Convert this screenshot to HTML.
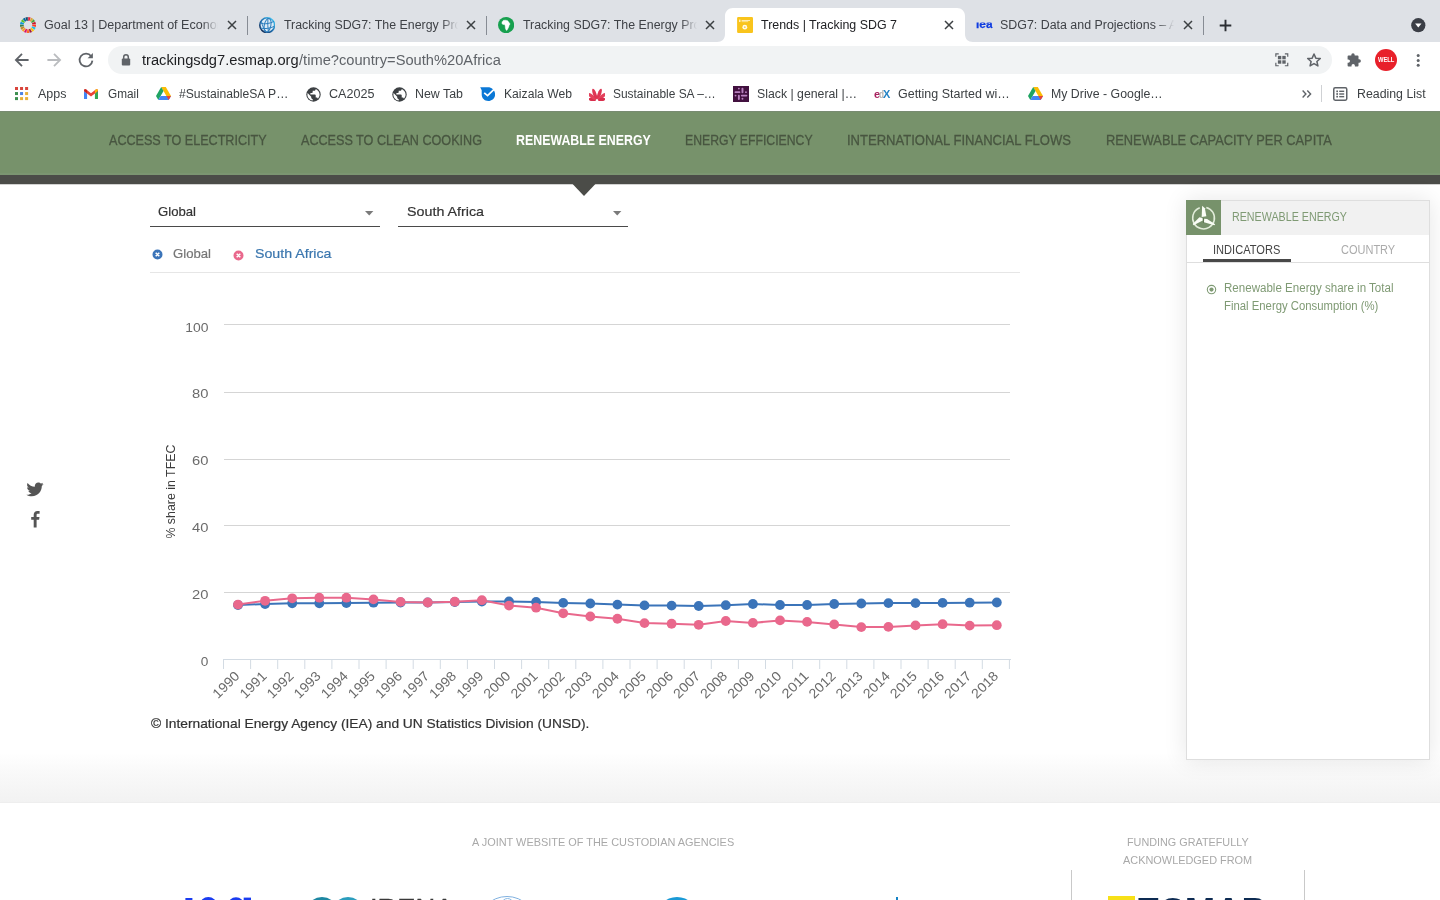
<!DOCTYPE html>
<html lang="en"><head><meta charset="utf-8"><title>Trends | Tracking SDG 7</title>
<style>
html,body{margin:0;padding:0;}
body{width:1440px;height:900px;overflow:hidden;position:relative;background:#fff;font-family:"Liberation Sans",sans-serif;}
.t{position:absolute;white-space:nowrap;transform-origin:0 50%;margin:0;padding:0;}
.b{position:absolute;display:block;}
#root{position:absolute;left:0;top:0;width:1440px;height:900px;overflow:hidden;will-change:transform;}
svg text{font-family:"Liberation Sans",sans-serif;}
</style></head><body><div id="root">
<div class="b" style="left:0px;top:0px;width:1440px;height:42px;background:#dee1e6;"></div>
<div class="b" style="left:0px;top:42px;width:1440px;height:68px;background:#fff;"></div>
<svg class="b" style="left:717px;top:8px;" width="256" height="34" viewBox="0 0 256 34"><path d="M0 34 C5 34 8 31 8 26 V8 C8 3.5 11.5 0 16 0 H240 C244.5 0 248 3.5 248 8 V26 C248 31 251 34 256 34 Z" fill="#fff"/></svg>
<div class="b" style="left:247px;top:16px;width:1px;height:19px;background:#878c94;"></div>
<div class="b" style="left:486px;top:16px;width:1px;height:19px;background:#878c94;"></div>
<div class="b" style="left:1203px;top:16px;width:1px;height:19px;background:#878c94;"></div>
<div class="b" style="left:44.2px;top:17px;width:176px;height:16px;overflow:hidden;"><span class="t" style="left:0;top:1px;font-size:12px;line-height:14px;color:#3f4247;transform:scaleX(1.045);">Goal 13 | Department of Economic and Social Affairs</span><div class="b" style="right:0;top:0;width:18px;height:16px;background:linear-gradient(90deg,rgba(222,225,230,0),rgba(222,225,230,1) 90%);"></div></div>
<div class="b" style="left:283.7px;top:17px;width:176px;height:16px;overflow:hidden;"><span class="t" style="left:0;top:1px;font-size:12px;line-height:14px;color:#3f4247;transform:scaleX(1.031);">Tracking SDG7: The Energy Progress Report</span><div class="b" style="right:0;top:0;width:18px;height:16px;background:linear-gradient(90deg,rgba(222,225,230,0),rgba(222,225,230,1) 90%);"></div></div>
<div class="b" style="left:522.5px;top:17px;width:176px;height:16px;overflow:hidden;"><span class="t" style="left:0;top:1px;font-size:12px;line-height:14px;color:#3f4247;transform:scaleX(1.031);">Tracking SDG7: The Energy Progress Report</span><div class="b" style="right:0;top:0;width:18px;height:16px;background:linear-gradient(90deg,rgba(222,225,230,0),rgba(222,225,230,1) 90%);"></div></div>
<span class="t" style="left:760.90px;top:17.60px;font-size:12px;line-height:14px;color:#202124;transform:scaleX(1.0352);">Trends | Tracking SDG 7</span>
<div class="b" style="left:1000.4px;top:17px;width:176px;height:16px;overflow:hidden;"><span class="t" style="left:0;top:1px;font-size:12px;line-height:14px;color:#3f4247;transform:scaleX(1.034);">SDG7: Data and Projections – Analysis - IEA</span><div class="b" style="right:0;top:0;width:18px;height:16px;background:linear-gradient(90deg,rgba(222,225,230,0),rgba(222,225,230,1) 90%);"></div></div>
<svg class="b" style="left:226.7px;top:20.2px;" width="10" height="10" viewBox="0 0 10 10"><path d="M1 1 L9 9 M9 1 L1 9" stroke="#3c4043" stroke-width="1.5" fill="none"/></svg>
<svg class="b" style="left:466px;top:20.2px;" width="10" height="10" viewBox="0 0 10 10"><path d="M1 1 L9 9 M9 1 L1 9" stroke="#3c4043" stroke-width="1.5" fill="none"/></svg>
<svg class="b" style="left:704.6px;top:20.2px;" width="10" height="10" viewBox="0 0 10 10"><path d="M1 1 L9 9 M9 1 L1 9" stroke="#3c4043" stroke-width="1.5" fill="none"/></svg>
<svg class="b" style="left:943.7px;top:20.2px;" width="10" height="10" viewBox="0 0 10 10"><path d="M1 1 L9 9 M9 1 L1 9" stroke="#3c4043" stroke-width="1.5" fill="none"/></svg>
<svg class="b" style="left:1182.7px;top:20.2px;" width="10" height="10" viewBox="0 0 10 10"><path d="M1 1 L9 9 M9 1 L1 9" stroke="#3c4043" stroke-width="1.5" fill="none"/></svg>
<svg class="b" style="left:20px;top:17px;" width="16" height="16" viewBox="0 0 16 16"><path d="M8.24 0.00 A8.0 8.0 0 0 1 10.66 0.46 L9.43 3.95 A4.3 4.3 0 0 0 8.13 3.70 Z" fill="#e5243b"/><path d="M11.11 0.63 A8.0 8.0 0 0 1 13.21 1.93 L10.80 4.74 A4.3 4.3 0 0 0 9.67 4.04 Z" fill="#dda63a"/><path d="M13.56 2.25 A8.0 8.0 0 0 1 15.05 4.22 L11.79 5.97 A4.3 4.3 0 0 0 10.99 4.91 Z" fill="#4c9f38"/><path d="M15.27 4.65 A8.0 8.0 0 0 1 15.94 7.02 L12.27 7.47 A4.3 4.3 0 0 0 11.90 6.20 Z" fill="#c5192d"/><path d="M15.98 7.50 A8.0 8.0 0 0 1 15.76 9.96 L12.17 9.05 A4.3 4.3 0 0 0 12.29 7.73 Z" fill="#ff3a21"/><path d="M15.63 10.42 A8.0 8.0 0 0 1 14.53 12.63 L11.51 10.49 A4.3 4.3 0 0 0 12.10 9.30 Z" fill="#26bde2"/><path d="M14.24 13.01 A8.0 8.0 0 0 1 12.41 14.67 L10.37 11.59 A4.3 4.3 0 0 0 11.35 10.69 Z" fill="#fcc30b"/><path d="M12.01 14.93 A8.0 8.0 0 0 1 9.71 15.82 L8.92 12.20 A4.3 4.3 0 0 0 10.15 11.72 Z" fill="#a21942"/><path d="M9.23 15.90 A8.0 8.0 0 0 1 6.77 15.90 L7.34 12.25 A4.3 4.3 0 0 0 8.66 12.25 Z" fill="#fd6925"/><path d="M6.29 15.82 A8.0 8.0 0 0 1 3.99 14.93 L5.85 11.72 A4.3 4.3 0 0 0 7.08 12.20 Z" fill="#dd1367"/><path d="M3.59 14.67 A8.0 8.0 0 0 1 1.76 13.01 L4.65 10.69 A4.3 4.3 0 0 0 5.63 11.59 Z" fill="#fd9d24"/><path d="M1.47 12.63 A8.0 8.0 0 0 1 0.37 10.42 L3.90 9.30 A4.3 4.3 0 0 0 4.49 10.49 Z" fill="#bf8b2e"/><path d="M0.24 9.96 A8.0 8.0 0 0 1 0.02 7.50 L3.71 7.73 A4.3 4.3 0 0 0 3.83 9.05 Z" fill="#3f7e44"/><path d="M0.06 7.02 A8.0 8.0 0 0 1 0.73 4.65 L4.10 6.20 A4.3 4.3 0 0 0 3.73 7.47 Z" fill="#0a97d9"/><path d="M0.95 4.22 A8.0 8.0 0 0 1 2.44 2.25 L5.01 4.91 A4.3 4.3 0 0 0 4.21 5.97 Z" fill="#56c02b"/><path d="M2.79 1.93 A8.0 8.0 0 0 1 4.89 0.63 L6.33 4.04 A4.3 4.3 0 0 0 5.20 4.74 Z" fill="#00689d"/><path d="M5.34 0.46 A8.0 8.0 0 0 1 7.76 0.00 L7.87 3.70 A4.3 4.3 0 0 0 6.57 3.95 Z" fill="#19486a"/></svg>
<svg class="b" style="left:258.7px;top:16.5px;" width="16.4" height="16.4" viewBox="0 0 16.4 16.4"><defs><linearGradient id="wbg" x1="0.1" y1="0.9" x2="0.9" y2="0.1"><stop offset="0" stop-color="#16305a"/><stop offset="0.5" stop-color="#1f6fb0"/><stop offset="1" stop-color="#45c4f2"/></linearGradient></defs><circle cx="8.2" cy="8.2" r="7.4" fill="#dcebf6" stroke="url(#wbg)" stroke-width="1.6"/><g stroke="#2b7dbd" stroke-width="1" fill="none"><ellipse cx="8.6" cy="8.2" rx="3.3" ry="7" transform="rotate(12 8.2 8.2)"/><path d="M1.4 6 C5 7.6 11 6.6 14.8 4.4 M1.6 11 C6 12.4 11.4 11.2 15.2 9.4 M8.9 1.2 C8.6 6 8.8 11 9.4 15.2 M2.4 4.2 C3.4 9 5 12.4 7.6 15"/></g></svg>
<svg class="b" style="left:497.8px;top:16.8px;" width="16.2" height="16.2" viewBox="0 0 16.2 16.2"><circle cx="8.1" cy="8.1" r="8.1" fill="#17a04f"/><polygon points="4.17,4.67 5.50,3.33 7.83,3.17 9.83,3.83 10.50,4.83 11.83,6.50 12.00,7.50 11.17,8.00 10.83,9.83 9.83,11.83 9.00,13.33 8.17,13.17 7.33,11.17 7.17,8.83 6.50,7.50 4.83,7.50 3.83,6.17" fill="#fff" stroke="#fff" stroke-width="0.4" stroke-linejoin="round"/></svg>
<svg class="b" style="left:737px;top:17px;" width="16" height="16" viewBox="0 0 16 16"><rect x="0.1" y="0" width="15.9" height="16" rx="1.2" fill="#f9c41c"/><circle cx="7.8" cy="10.2" r="2.4" fill="#fffbe8"/><circle cx="7.8" cy="10.2" r="0.9" fill="#fbd04f"/><rect x="2.2" y="2.6" width="1.2" height="2.4" fill="#fff" opacity=".9"/><rect x="4.6" y="3.1" width="8.4" height="0.8" fill="#fff" opacity=".85"/><rect x="4.6" y="4.4" width="6.6" height="0.7" fill="#fff" opacity=".7"/></svg>
<span class="t" style="left:975.60px;top:18.30px;font-size:11.2px;line-height:13px;color:#0f3ce0;font-weight:700;transform:scaleX(1.0663);-webkit-text-stroke:0.25px #0f3ce0;clip-path:inset(4.3px 0 0 0);">iea</span>
<svg class="b" style="left:1219.3px;top:18.6px;" width="13" height="13" viewBox="0 0 13 13"><path d="M6.5 0.7 V12.3 M0.7 6.5 H12.3" stroke="#2b2e33" stroke-width="1.9" fill="none"/></svg>
<svg class="b" style="left:1410.5px;top:18px;" width="15" height="15" viewBox="0 0 15 15"><circle cx="7.3" cy="7.2" r="7.1" fill="#3b3e46"/><path d="M4.1 5.6 H10.5 L7.3 9.6 Z" fill="#fff"/></svg>
<svg class="b" style="left:12px;top:50px;" width="20" height="20" viewBox="0 0 20 20"><path d="M16.6 10 H4.4 M10 3.9 L3.9 10 L10 16.1" stroke="#5f6368" stroke-width="1.8" fill="none"/></svg>
<svg class="b" style="left:44px;top:50px;" width="20" height="20" viewBox="0 0 20 20"><path d="M3.4 10 H15.6 M10 3.9 L16.1 10 L10 16.1" stroke="#babcbf" stroke-width="1.8" fill="none"/></svg>
<svg class="b" style="left:76px;top:50px;" width="20" height="20" viewBox="0 0 20 20"><path d="M15.2 6.2 A6.4 6.4 0 1 0 16.4 10.6" stroke="#5f6368" stroke-width="1.8" fill="none"/><path d="M16.9 2.9 V8.2 H11.6 Z" fill="#5f6368"/></svg>
<div class="b" style="left:108px;top:46px;width:1224px;height:28px;background:#f1f3f4;border-radius:14px;"></div>
<svg class="b" style="left:120.3px;top:53.3px;" width="12" height="14" viewBox="0 0 12 14"><rect x="1.8" y="5.6" width="8.4" height="6.9" rx="1" fill="#5f6368"/><path d="M3.7 6 V4 A2.3 2.3 0 0 1 8.3 4 V6" stroke="#5f6368" stroke-width="1.5" fill="none"/></svg>
<span class="t" style="left:142.00px;top:51.50px;font-size:14px;line-height:17px;color:#202124;transform:scaleX(1.0480);">trackingsdg7.esmap.org</span>
<span class="t" style="left:298.57px;top:51.50px;font-size:14px;line-height:17px;color:#5f6368;transform:scaleX(1.0480);">/time?country=South%20Africa</span>
<svg class="b" style="left:1275.2px;top:53px;" width="13.6" height="13.6" viewBox="0 0 16 16"><g fill="none" stroke="#5f6368" stroke-width="1.4"><path d="M1 4.4 V1 H4.4 M11.6 1 H15 V4.4 M15 11.6 V15 H11.6 M4.4 15 H1 V11.6"/></g><g fill="#5f6368"><rect x="3.4" y="3.4" width="4" height="4"/><rect x="8.6" y="3.4" width="4" height="4"/><rect x="3.4" y="8.6" width="4" height="4"/><rect x="8.6" y="8.6" width="4" height="4"/></g></svg>
<svg class="b" style="left:1305.7px;top:52px;" width="16" height="16" viewBox="0 0 18 18"><path d="M9 2.2 L11.05 6.9 L16.1 7.35 L12.25 10.7 L13.4 15.7 L9 13.05 L4.6 15.7 L5.75 10.7 L1.9 7.35 L6.95 6.9 Z" stroke="#5f6368" stroke-width="1.7" fill="none" stroke-linejoin="round"/></svg>
<svg class="b" style="left:1344.8px;top:51.5px;" width="17" height="17" viewBox="0 0 17 17"><path d="M6.3 2.9 A1.7 1.7 0 0 1 9.7 2.9 V3.6 H12.6 A0.9 0.9 0 0 1 13.5 4.5 V7.3 H14.2 A1.7 1.7 0 0 1 14.2 10.7 H13.5 V13.6 A0.9 0.9 0 0 1 12.6 14.5 H9.9 V13.7 A1.7 1.7 0 0 0 6.5 13.7 V14.5 H3.5 A0.9 0.9 0 0 1 2.6 13.6 V10.8 H3.3 A1.7 1.7 0 0 0 3.3 7.4 H2.6 V4.5 A0.9 0.9 0 0 1 3.5 3.6 H6.3 Z" fill="#5f6368"/></svg>
<div class="b" style="left:1375px;top:49px;width:22px;height:22px;background:#e8202a;border-radius:50%;"></div>
<span class="t" style="left:1377.70px;top:56.10px;font-size:7px;line-height:8px;color:#fff;font-weight:700;transform:scaleX(0.8271);">WELL</span>
<svg class="b" style="left:1415px;top:51px;" width="6" height="18" viewBox="0 0 6 18"><circle cx="3.2" cy="4.6" r="1.5" fill="#5f6368"/><circle cx="3.2" cy="9.4" r="1.5" fill="#5f6368"/><circle cx="3.2" cy="14.2" r="1.5" fill="#5f6368"/></svg>
<span class="t" style="left:38.30px;top:87.00px;font-size:12px;line-height:14px;color:#3c4043;transform:scaleX(1.0384);">Apps</span>
<span class="t" style="left:107.50px;top:87.00px;font-size:12px;line-height:14px;color:#3c4043;transform:scaleX(0.9829);">Gmail</span>
<span class="t" style="left:179.00px;top:87.00px;font-size:12px;line-height:14px;color:#3c4043;transform:scaleX(1.0114);">#SustainableSA P…</span>
<span class="t" style="left:329.00px;top:87.00px;font-size:12px;line-height:14px;color:#3c4043;transform:scaleX(1.0470);">CA2025</span>
<span class="t" style="left:415.30px;top:87.00px;font-size:12px;line-height:14px;color:#3c4043;transform:scaleX(1.0330);">New Tab</span>
<span class="t" style="left:504.20px;top:87.00px;font-size:12px;line-height:14px;color:#3c4043;transform:scaleX(1.0127);">Kaizala Web</span>
<span class="t" style="left:613.30px;top:87.00px;font-size:12px;line-height:14px;color:#3c4043;transform:scaleX(0.9942);">Sustainable SA –…</span>
<span class="t" style="left:757.30px;top:87.00px;font-size:12px;line-height:14px;color:#3c4043;transform:scaleX(1.0245);">Slack | general |…</span>
<span class="t" style="left:898.30px;top:87.00px;font-size:12px;line-height:14px;color:#3c4043;transform:scaleX(1.0403);">Getting Started wi…</span>
<span class="t" style="left:1051.00px;top:87.00px;font-size:12px;line-height:14px;color:#3c4043;transform:scaleX(1.0277);">My Drive - Google…</span>
<span class="t" style="left:1356.70px;top:87.00px;font-size:12px;line-height:14px;color:#3c4043;transform:scaleX(1.0284);">Reading List</span>
<svg class="b" style="left:14.5px;top:87px;" width="14" height="14" viewBox="0 0 14 14"><rect x="0.0" y="0.0" width="3.0" height="3.0" fill="#d9453c"/><rect x="5.05" y="0.0" width="3.0" height="3.0" fill="#d9453c"/><rect x="10.1" y="0.0" width="3.0" height="3.0" fill="#d9453c"/><rect x="0.0" y="5.05" width="3.0" height="3.0" fill="#3d8f4f"/><rect x="5.05" y="5.05" width="3.0" height="3.0" fill="#4b83e6"/><rect x="10.1" y="5.05" width="3.0" height="3.0" fill="#e8b13a"/><rect x="0.0" y="10.1" width="3.0" height="3.0" fill="#3d8f4f"/><rect x="5.05" y="10.1" width="3.0" height="3.0" fill="#e8b13a"/><rect x="10.1" y="10.1" width="3.0" height="3.0" fill="#e8b13a"/></svg>
<svg class="b" style="left:83.6px;top:88.6px;" width="14" height="10.5" viewBox="0 0 15 11"><path d="M0 1.6 V10 A1 1 0 0 0 1 11 H3.3 V4.6 Z" fill="#4285f4"/><path d="M15 1.6 V10 A1 1 0 0 1 14 11 H11.7 V4.6 Z" fill="#34a853"/><path d="M0 1.6 A1.5 1.5 0 0 1 2.4 0.4 L7.5 4.3 L12.6 0.4 A1.5 1.5 0 0 1 15 1.6 V2.2 L7.5 7.9 L0 2.2 Z" fill="#ea4335"/><path d="M0 1.6 L3.3 4.6 V1.2 L2.4 0.4 A1.5 1.5 0 0 0 0 1.6 Z" fill="#c5221f"/><path d="M15 1.6 L11.7 4.6 V1.2 L12.6 0.4 A1.5 1.5 0 0 1 15 1.6 Z" fill="#fbbc04"/></svg>
<svg class="b" style="left:155.5px;top:87.3px;" width="15" height="13.4" viewBox="0 0 15 13.4"><path d="M5.2 0 H9.8 L15 9 H10.4 Z" fill="#fbbc04"/><path d="M5.2 0 L0 9 L2.3 13 L7.5 4 Z" fill="#1fa463"/><path d="M2.3 13 H12.7 L15 9 H4.6 Z" fill="#4285f4"/><path d="M10.4 9 H15 L12.7 13 Z" fill="#ea4335"/></svg>
<svg class="b" style="left:1027.5px;top:87.3px;" width="15" height="13.4" viewBox="0 0 15 13.4"><path d="M5.2 0 H9.8 L15 9 H10.4 Z" fill="#fbbc04"/><path d="M5.2 0 L0 9 L2.3 13 L7.5 4 Z" fill="#1fa463"/><path d="M2.3 13 H12.7 L15 9 H4.6 Z" fill="#4285f4"/><path d="M10.4 9 H15 L12.7 13 Z" fill="#ea4335"/></svg>
<svg class="b" style="left:306px;top:86.5px;" width="15" height="15" viewBox="0 0 15 15"><circle cx="7.5" cy="7.5" r="7.2" fill="#3c4043"/><path d="M6.7 13.6 C3.7 13.2 1.4 10.6 1.4 7.5 C1.4 7 1.5 6.6 1.6 6.1 L5.2 9.7 V10.5 C5.2 11.3 5.9 12 6.7 12 Z M11.9 11.7 C11.7 11.1 11.1 10.6 10.4 10.6 H9.7 V8.3 C9.7 7.9 9.4 7.6 8.9 7.6 H4.4 V6 H5.9 C6.3 6 6.7 5.7 6.7 5.2 V3.7 H8.2 C9 3.7 9.7 3 9.7 2.2 V1.9 C11.9 2.8 13.6 5 13.6 7.5 C13.6 9.1 12.9 10.6 11.9 11.7 Z" fill="#fff"/></svg>
<svg class="b" style="left:391.5px;top:86.5px;" width="15" height="15" viewBox="0 0 15 15"><circle cx="7.5" cy="7.5" r="7.2" fill="#3c4043"/><path d="M6.7 13.6 C3.7 13.2 1.4 10.6 1.4 7.5 C1.4 7 1.5 6.6 1.6 6.1 L5.2 9.7 V10.5 C5.2 11.3 5.9 12 6.7 12 Z M11.9 11.7 C11.7 11.1 11.1 10.6 10.4 10.6 H9.7 V8.3 C9.7 7.9 9.4 7.6 8.9 7.6 H4.4 V6 H5.9 C6.3 6 6.7 5.7 6.7 5.2 V3.7 H8.2 C9 3.7 9.7 3 9.7 2.2 V1.9 C11.9 2.8 13.6 5 13.6 7.5 C13.6 9.1 12.9 10.6 11.9 11.7 Z" fill="#fff"/></svg>
<svg class="b" style="left:479.9px;top:86.9px;" width="15.2" height="14" viewBox="0 0 15.2 14"><path d="M0.2 0.3 L8 0.2 C12 0.2 15.1 3.4 15.1 7.3 C15.1 11.1 12 13.9 8.3 13.9 C4.5 13.9 1.7 11 1.7 7.4 V3.2 Z" fill="#0b78d6"/><path d="M4.2 5.8 L7.6 8.7 L14 2.3" stroke="#fff" stroke-width="1.7" fill="none"/></svg>
<svg class="b" style="left:588.9px;top:87.6px;" width="16" height="13" viewBox="0 0 16 13"><ellipse cx="8" cy="7.60" rx="1.75" ry="3.6" fill="#d92f4d" transform="rotate(-80 8 12.4)"/><ellipse cx="8" cy="6.20" rx="1.75" ry="5.0" fill="#e4405c" transform="rotate(-52 8 12.4)"/><ellipse cx="8" cy="5.60" rx="1.75" ry="5.6" fill="#de3553" transform="rotate(-20 8 12.4)"/><ellipse cx="8" cy="5.60" rx="1.75" ry="5.6" fill="#de3553" transform="rotate(20 8 12.4)"/><ellipse cx="8" cy="6.20" rx="1.75" ry="5.0" fill="#e4405c" transform="rotate(52 8 12.4)"/><ellipse cx="8" cy="7.60" rx="1.75" ry="3.6" fill="#d92f4d" transform="rotate(80 8 12.4)"/></svg>
<svg class="b" style="left:733px;top:86px;" width="16" height="16" viewBox="0 0 16 16"><rect width="16" height="16" fill="#42113f"/><g stroke="#b981c0" stroke-width="1.9" stroke-linecap="round" fill="none"><path d="M9.47 2.6 V6.3 M2.5 6.13 H6.4 M8.8 9.6 H13.4 M5.87 9.7 V13"/><path d="M5.87 2.6 V2.61 M2.55 9.6 H2.56 M12.95 6.13 H12.96 M9.47 12.7 V12.71"/></g></svg>
<span class="t" style="left:873.70px;top:87.00px;font-size:11.5px;line-height:14px;color:#a8215e;font-weight:700;transform:scaleX(0.9695);">e</span>
<span class="t" style="left:879.00px;top:87.50px;font-size:10.5px;line-height:13px;color:#b4b4b4;font-weight:700;transform:scaleX(0.7796);">d</span>
<span class="t" style="left:882.90px;top:87.50px;font-size:11.2px;line-height:13px;color:#2383c5;font-weight:700;transform:scaleX(0.9771);">X</span>
<svg class="b" style="left:1301px;top:89px;" width="11" height="10" viewBox="0 0 11 10"><path d="M1.6 1.6 L4.9 5 L1.6 8.4 M6.3 1.6 L9.6 5 L6.3 8.4" stroke="#5f6368" stroke-width="1.4" fill="none"/></svg>
<div class="b" style="left:1321px;top:85px;width:1px;height:17px;background:#cfd1d4;"></div>
<svg class="b" style="left:1333px;top:87px;" width="14.5" height="14" viewBox="0 0 14.5 14"><rect x="0.75" y="0.75" width="13" height="12.5" rx="1.4" fill="none" stroke="#5f6368" stroke-width="1.5"/><g fill="#5f6368"><rect x="3.3" y="3.5" width="1.7" height="1.7"/><rect x="3.3" y="6.15" width="1.7" height="1.7"/><rect x="3.3" y="8.8" width="1.7" height="1.7"/><rect x="6.2" y="3.6" width="5" height="1.4"/><rect x="6.2" y="6.3" width="5" height="1.4"/><rect x="6.2" y="8.95" width="5" height="1.4"/></g></svg>
<div class="b" style="left:0px;top:111px;width:1440px;height:64px;background:#77926b;"></div>
<div class="b" style="left:0px;top:111px;width:1440px;height:1px;background:#788b71;"></div>
<div class="b" style="left:0px;top:173px;width:1440px;height:2px;background:#7b9571;"></div>
<div class="b" style="left:0px;top:175px;width:1440px;height:9px;background:#4b4c48;"></div>
<svg class="b" style="left:0px;top:183px;" width="1440" height="14" viewBox="0 0 1440 14"><rect x="0" y="0" width="1440" height="1.25" fill="#4b4c48"/><path d="M572.6 1 H595.4 L584 12.9 Z" fill="#4b4c48"/></svg>
<span class="t" style="left:108.70px;top:131.50px;font-size:14px;line-height:17px;color:#485640;transform:scaleX(0.8990);-webkit-text-stroke:0.3px #485640;">ACCESS TO ELECTRICITY</span>
<span class="t" style="left:300.80px;top:131.50px;font-size:14px;line-height:17px;color:#485640;transform:scaleX(0.9006);-webkit-text-stroke:0.3px #485640;">ACCESS TO CLEAN COOKING</span>
<span class="t" style="left:516.00px;top:131.50px;font-size:14px;line-height:17px;color:#fff;font-weight:700;transform:scaleX(0.8841);">RENEWABLE ENERGY</span>
<span class="t" style="left:685.00px;top:131.50px;font-size:14px;line-height:17px;color:#485640;transform:scaleX(0.8740);-webkit-text-stroke:0.3px #485640;">ENERGY EFFICIENCY</span>
<span class="t" style="left:847.00px;top:131.50px;font-size:14px;line-height:17px;color:#485640;transform:scaleX(0.9309);-webkit-text-stroke:0.3px #485640;">INTERNATIONAL FINANCIAL FLOWS</span>
<span class="t" style="left:1105.60px;top:131.50px;font-size:14px;line-height:17px;color:#485640;transform:scaleX(0.9171);-webkit-text-stroke:0.3px #485640;">RENEWABLE CAPACITY PER CAPITA</span>
<div class="b" style="left:0px;top:753px;width:1440px;height:50px;background:linear-gradient(180deg,#ffffff 0%,#f9f9f9 40%,#f2f2f2 100%);"></div>
<div class="b" style="left:0px;top:802px;width:1440px;height:1px;background:#eeeeee;"></div>
<span class="t" style="left:158.30px;top:203.50px;font-size:13.5px;line-height:16px;color:#333;transform:scaleX(0.9738);-webkit-text-stroke:0.2px #333;">Global</span>
<span class="t" style="left:406.70px;top:203.50px;font-size:13.5px;line-height:16px;color:#333;transform:scaleX(1.0578);-webkit-text-stroke:0.2px #333;">South Africa</span>
<div class="b" style="left:150px;top:226px;width:230px;height:1px;background:#4a4a4a;"></div>
<div class="b" style="left:398px;top:226px;width:230px;height:1px;background:#4a4a4a;"></div>
<svg class="b" style="left:365px;top:210.5px;" width="9" height="5" viewBox="0 0 9 5"><path d="M0 0 H8.4 L4.2 4.6 Z" fill="#7a7a7a"/></svg>
<svg class="b" style="left:612.6px;top:210.5px;" width="9" height="5" viewBox="0 0 9 5"><path d="M0 0 H8.4 L4.2 4.6 Z" fill="#7a7a7a"/></svg>
<svg class="b" style="left:151.5px;top:248.6px;" width="11" height="11" viewBox="0 0 11 11"><circle cx="5.5" cy="5.5" r="5" fill="#3b74b9"/><path d="M3.7 3.7 L7.3 7.3 M7.3 3.7 L3.7 7.3" stroke="#fff" stroke-width="1.5" fill="none"/></svg>
<svg class="b" style="left:232.5px;top:249.5px;" width="11" height="11" viewBox="0 0 11 11"><circle cx="5.5" cy="5.5" r="5" fill="#e9688c"/><path d="M3.7 3.7 L7.3 7.3 M7.3 3.7 L3.7 7.3" stroke="#fff" stroke-width="1.5" fill="none"/></svg>
<span class="t" style="left:173.30px;top:245.50px;font-size:13.5px;line-height:16px;color:#757575;transform:scaleX(0.9738);-webkit-text-stroke:0.2px #757575;">Global</span>
<span class="t" style="left:255.20px;top:245.50px;font-size:13.5px;line-height:16px;color:#3a76ae;transform:scaleX(1.0510);-webkit-text-stroke:0.2px #3a76ae;">South Africa</span>
<div class="b" style="left:150px;top:272px;width:870px;height:1px;background:#e6e6e6;"></div>
<svg class="b" style="left:0px;top:0px;overflow:visible;" width="1100" height="745" viewBox="0 0 1100 745"><rect x="224" y="324" width="786" height="1" fill="#d5d5d5"/><rect x="224" y="392" width="786" height="1" fill="#d5d5d5"/><rect x="224" y="459" width="786" height="1" fill="#d5d5d5"/><rect x="224" y="525" width="786" height="1" fill="#d5d5d5"/><rect x="224" y="592" width="786" height="1" fill="#d5d5d5"/><rect x="223" y="659" width="788" height="1" fill="#d3dbe3"/><rect x="223.00" y="659" width="1" height="10" fill="#d3dbe3"/><rect x="250.10" y="659" width="1" height="10" fill="#d3dbe3"/><rect x="277.20" y="659" width="1" height="10" fill="#d3dbe3"/><rect x="304.30" y="659" width="1" height="10" fill="#d3dbe3"/><rect x="331.40" y="659" width="1" height="10" fill="#d3dbe3"/><rect x="358.50" y="659" width="1" height="10" fill="#d3dbe3"/><rect x="385.60" y="659" width="1" height="10" fill="#d3dbe3"/><rect x="412.70" y="659" width="1" height="10" fill="#d3dbe3"/><rect x="439.80" y="659" width="1" height="10" fill="#d3dbe3"/><rect x="466.90" y="659" width="1" height="10" fill="#d3dbe3"/><rect x="494.00" y="659" width="1" height="10" fill="#d3dbe3"/><rect x="521.10" y="659" width="1" height="10" fill="#d3dbe3"/><rect x="548.20" y="659" width="1" height="10" fill="#d3dbe3"/><rect x="575.30" y="659" width="1" height="10" fill="#d3dbe3"/><rect x="602.40" y="659" width="1" height="10" fill="#d3dbe3"/><rect x="629.50" y="659" width="1" height="10" fill="#d3dbe3"/><rect x="656.60" y="659" width="1" height="10" fill="#d3dbe3"/><rect x="683.70" y="659" width="1" height="10" fill="#d3dbe3"/><rect x="710.80" y="659" width="1" height="10" fill="#d3dbe3"/><rect x="737.90" y="659" width="1" height="10" fill="#d3dbe3"/><rect x="765.00" y="659" width="1" height="10" fill="#d3dbe3"/><rect x="792.10" y="659" width="1" height="10" fill="#d3dbe3"/><rect x="819.20" y="659" width="1" height="10" fill="#d3dbe3"/><rect x="846.30" y="659" width="1" height="10" fill="#d3dbe3"/><rect x="873.40" y="659" width="1" height="10" fill="#d3dbe3"/><rect x="900.50" y="659" width="1" height="10" fill="#d3dbe3"/><rect x="927.60" y="659" width="1" height="10" fill="#d3dbe3"/><rect x="954.70" y="659" width="1" height="10" fill="#d3dbe3"/><rect x="981.80" y="659" width="1" height="10" fill="#d3dbe3"/><rect x="1008.90" y="659" width="1" height="10" fill="#d3dbe3"/><text x="208.4" y="332" text-anchor="end" font-size="13.5" fill="#6b6b6b" textLength="23.2" lengthAdjust="spacingAndGlyphs">100</text><text x="208.4" y="398" text-anchor="end" font-size="13.5" fill="#6b6b6b" textLength="16.4" lengthAdjust="spacingAndGlyphs">80</text><text x="208.4" y="465" text-anchor="end" font-size="13.5" fill="#6b6b6b" textLength="16.4" lengthAdjust="spacingAndGlyphs">60</text><text x="208.4" y="532" text-anchor="end" font-size="13.5" fill="#6b6b6b" textLength="16.4" lengthAdjust="spacingAndGlyphs">40</text><text x="208.4" y="599" text-anchor="end" font-size="13.5" fill="#6b6b6b" textLength="16.4" lengthAdjust="spacingAndGlyphs">20</text><text x="208.4" y="666" text-anchor="end" font-size="13.5" fill="#6b6b6b" textLength="7.6" lengthAdjust="spacingAndGlyphs">0</text><text transform="translate(174.6,538.6) rotate(-90)" font-size="13" fill="#3c3c3c" textLength="94" lengthAdjust="spacingAndGlyphs">% share in TFEC</text><text transform="translate(240.40,676.8) rotate(-45)" text-anchor="end" font-size="13.5" fill="#6b6b6b" textLength="31.6" lengthAdjust="spacingAndGlyphs">1990</text><text transform="translate(267.50,676.8) rotate(-45)" text-anchor="end" font-size="13.5" fill="#6b6b6b" textLength="31.6" lengthAdjust="spacingAndGlyphs">1991</text><text transform="translate(294.60,676.8) rotate(-45)" text-anchor="end" font-size="13.5" fill="#6b6b6b" textLength="31.6" lengthAdjust="spacingAndGlyphs">1992</text><text transform="translate(321.70,676.8) rotate(-45)" text-anchor="end" font-size="13.5" fill="#6b6b6b" textLength="31.6" lengthAdjust="spacingAndGlyphs">1993</text><text transform="translate(348.80,676.8) rotate(-45)" text-anchor="end" font-size="13.5" fill="#6b6b6b" textLength="31.6" lengthAdjust="spacingAndGlyphs">1994</text><text transform="translate(375.90,676.8) rotate(-45)" text-anchor="end" font-size="13.5" fill="#6b6b6b" textLength="31.6" lengthAdjust="spacingAndGlyphs">1995</text><text transform="translate(403.00,676.8) rotate(-45)" text-anchor="end" font-size="13.5" fill="#6b6b6b" textLength="31.6" lengthAdjust="spacingAndGlyphs">1996</text><text transform="translate(430.10,676.8) rotate(-45)" text-anchor="end" font-size="13.5" fill="#6b6b6b" textLength="31.6" lengthAdjust="spacingAndGlyphs">1997</text><text transform="translate(457.20,676.8) rotate(-45)" text-anchor="end" font-size="13.5" fill="#6b6b6b" textLength="31.6" lengthAdjust="spacingAndGlyphs">1998</text><text transform="translate(484.30,676.8) rotate(-45)" text-anchor="end" font-size="13.5" fill="#6b6b6b" textLength="31.6" lengthAdjust="spacingAndGlyphs">1999</text><text transform="translate(511.40,676.8) rotate(-45)" text-anchor="end" font-size="13.5" fill="#6b6b6b" textLength="31.6" lengthAdjust="spacingAndGlyphs">2000</text><text transform="translate(538.50,676.8) rotate(-45)" text-anchor="end" font-size="13.5" fill="#6b6b6b" textLength="31.6" lengthAdjust="spacingAndGlyphs">2001</text><text transform="translate(565.60,676.8) rotate(-45)" text-anchor="end" font-size="13.5" fill="#6b6b6b" textLength="31.6" lengthAdjust="spacingAndGlyphs">2002</text><text transform="translate(592.70,676.8) rotate(-45)" text-anchor="end" font-size="13.5" fill="#6b6b6b" textLength="31.6" lengthAdjust="spacingAndGlyphs">2003</text><text transform="translate(619.80,676.8) rotate(-45)" text-anchor="end" font-size="13.5" fill="#6b6b6b" textLength="31.6" lengthAdjust="spacingAndGlyphs">2004</text><text transform="translate(646.90,676.8) rotate(-45)" text-anchor="end" font-size="13.5" fill="#6b6b6b" textLength="31.6" lengthAdjust="spacingAndGlyphs">2005</text><text transform="translate(674.00,676.8) rotate(-45)" text-anchor="end" font-size="13.5" fill="#6b6b6b" textLength="31.6" lengthAdjust="spacingAndGlyphs">2006</text><text transform="translate(701.10,676.8) rotate(-45)" text-anchor="end" font-size="13.5" fill="#6b6b6b" textLength="31.6" lengthAdjust="spacingAndGlyphs">2007</text><text transform="translate(728.20,676.8) rotate(-45)" text-anchor="end" font-size="13.5" fill="#6b6b6b" textLength="31.6" lengthAdjust="spacingAndGlyphs">2008</text><text transform="translate(755.30,676.8) rotate(-45)" text-anchor="end" font-size="13.5" fill="#6b6b6b" textLength="31.6" lengthAdjust="spacingAndGlyphs">2009</text><text transform="translate(782.40,676.8) rotate(-45)" text-anchor="end" font-size="13.5" fill="#6b6b6b" textLength="31.6" lengthAdjust="spacingAndGlyphs">2010</text><text transform="translate(809.50,676.8) rotate(-45)" text-anchor="end" font-size="13.5" fill="#6b6b6b" textLength="31.6" lengthAdjust="spacingAndGlyphs">2011</text><text transform="translate(836.60,676.8) rotate(-45)" text-anchor="end" font-size="13.5" fill="#6b6b6b" textLength="31.6" lengthAdjust="spacingAndGlyphs">2012</text><text transform="translate(863.70,676.8) rotate(-45)" text-anchor="end" font-size="13.5" fill="#6b6b6b" textLength="31.6" lengthAdjust="spacingAndGlyphs">2013</text><text transform="translate(890.80,676.8) rotate(-45)" text-anchor="end" font-size="13.5" fill="#6b6b6b" textLength="31.6" lengthAdjust="spacingAndGlyphs">2014</text><text transform="translate(917.90,676.8) rotate(-45)" text-anchor="end" font-size="13.5" fill="#6b6b6b" textLength="31.6" lengthAdjust="spacingAndGlyphs">2015</text><text transform="translate(945.00,676.8) rotate(-45)" text-anchor="end" font-size="13.5" fill="#6b6b6b" textLength="31.6" lengthAdjust="spacingAndGlyphs">2016</text><text transform="translate(972.10,676.8) rotate(-45)" text-anchor="end" font-size="13.5" fill="#6b6b6b" textLength="31.6" lengthAdjust="spacingAndGlyphs">2017</text><text transform="translate(999.20,676.8) rotate(-45)" text-anchor="end" font-size="13.5" fill="#6b6b6b" textLength="31.6" lengthAdjust="spacingAndGlyphs">2018</text><polyline points="238.00,605.00 265.10,604.00 292.20,603.30 319.30,603.30 346.40,603.00 373.50,602.70 400.60,602.50 427.70,602.50 454.80,602.00 481.90,601.50 509.00,601.40 536.10,602.00 563.20,602.90 590.30,603.50 617.40,604.60 644.50,605.40 671.60,605.60 698.70,606.00 725.80,605.20 752.90,604.00 780.00,605.00 807.10,605.00 834.20,604.00 861.30,603.50 888.40,603.10 915.50,603.10 942.60,602.90 969.70,602.70 996.80,602.50" fill="none" stroke="#3b74b9" stroke-width="2"/><circle cx="238.00" cy="605.00" r="4.9" fill="#3b74b9"/><circle cx="265.10" cy="604.00" r="4.9" fill="#3b74b9"/><circle cx="292.20" cy="603.30" r="4.9" fill="#3b74b9"/><circle cx="319.30" cy="603.30" r="4.9" fill="#3b74b9"/><circle cx="346.40" cy="603.00" r="4.9" fill="#3b74b9"/><circle cx="373.50" cy="602.70" r="4.9" fill="#3b74b9"/><circle cx="400.60" cy="602.50" r="4.9" fill="#3b74b9"/><circle cx="427.70" cy="602.50" r="4.9" fill="#3b74b9"/><circle cx="454.80" cy="602.00" r="4.9" fill="#3b74b9"/><circle cx="481.90" cy="601.50" r="4.9" fill="#3b74b9"/><circle cx="509.00" cy="601.40" r="4.9" fill="#3b74b9"/><circle cx="536.10" cy="602.00" r="4.9" fill="#3b74b9"/><circle cx="563.20" cy="602.90" r="4.9" fill="#3b74b9"/><circle cx="590.30" cy="603.50" r="4.9" fill="#3b74b9"/><circle cx="617.40" cy="604.60" r="4.9" fill="#3b74b9"/><circle cx="644.50" cy="605.40" r="4.9" fill="#3b74b9"/><circle cx="671.60" cy="605.60" r="4.9" fill="#3b74b9"/><circle cx="698.70" cy="606.00" r="4.9" fill="#3b74b9"/><circle cx="725.80" cy="605.20" r="4.9" fill="#3b74b9"/><circle cx="752.90" cy="604.00" r="4.9" fill="#3b74b9"/><circle cx="780.00" cy="605.00" r="4.9" fill="#3b74b9"/><circle cx="807.10" cy="605.00" r="4.9" fill="#3b74b9"/><circle cx="834.20" cy="604.00" r="4.9" fill="#3b74b9"/><circle cx="861.30" cy="603.50" r="4.9" fill="#3b74b9"/><circle cx="888.40" cy="603.10" r="4.9" fill="#3b74b9"/><circle cx="915.50" cy="603.10" r="4.9" fill="#3b74b9"/><circle cx="942.60" cy="602.90" r="4.9" fill="#3b74b9"/><circle cx="969.70" cy="602.70" r="4.9" fill="#3b74b9"/><circle cx="996.80" cy="602.50" r="4.9" fill="#3b74b9"/><polyline points="238.00,604.60 265.10,600.80 292.20,598.30 319.30,597.70 346.40,597.70 373.50,599.40 400.60,601.90 427.70,602.50 454.80,601.70 481.90,600.20 509.00,605.60 536.10,607.70 563.20,613.30 590.30,616.50 617.40,618.75 644.50,623.10 671.60,623.75 698.70,624.80 725.80,621.00 752.90,622.90 780.00,620.40 807.10,621.90 834.20,624.40 861.30,627.10 888.40,626.90 915.50,625.40 942.60,624.20 969.70,625.60 996.80,625.20" fill="none" stroke="#e9688c" stroke-width="2"/><circle cx="238.00" cy="604.60" r="4.9" fill="#e9688c"/><circle cx="265.10" cy="600.80" r="4.9" fill="#e9688c"/><circle cx="292.20" cy="598.30" r="4.9" fill="#e9688c"/><circle cx="319.30" cy="597.70" r="4.9" fill="#e9688c"/><circle cx="346.40" cy="597.70" r="4.9" fill="#e9688c"/><circle cx="373.50" cy="599.40" r="4.9" fill="#e9688c"/><circle cx="400.60" cy="601.90" r="4.9" fill="#e9688c"/><circle cx="427.70" cy="602.50" r="4.9" fill="#e9688c"/><circle cx="454.80" cy="601.70" r="4.9" fill="#e9688c"/><circle cx="481.90" cy="600.20" r="4.9" fill="#e9688c"/><circle cx="509.00" cy="605.60" r="4.9" fill="#e9688c"/><circle cx="536.10" cy="607.70" r="4.9" fill="#e9688c"/><circle cx="563.20" cy="613.30" r="4.9" fill="#e9688c"/><circle cx="590.30" cy="616.50" r="4.9" fill="#e9688c"/><circle cx="617.40" cy="618.75" r="4.9" fill="#e9688c"/><circle cx="644.50" cy="623.10" r="4.9" fill="#e9688c"/><circle cx="671.60" cy="623.75" r="4.9" fill="#e9688c"/><circle cx="698.70" cy="624.80" r="4.9" fill="#e9688c"/><circle cx="725.80" cy="621.00" r="4.9" fill="#e9688c"/><circle cx="752.90" cy="622.90" r="4.9" fill="#e9688c"/><circle cx="780.00" cy="620.40" r="4.9" fill="#e9688c"/><circle cx="807.10" cy="621.90" r="4.9" fill="#e9688c"/><circle cx="834.20" cy="624.40" r="4.9" fill="#e9688c"/><circle cx="861.30" cy="627.10" r="4.9" fill="#e9688c"/><circle cx="888.40" cy="626.90" r="4.9" fill="#e9688c"/><circle cx="915.50" cy="625.40" r="4.9" fill="#e9688c"/><circle cx="942.60" cy="624.20" r="4.9" fill="#e9688c"/><circle cx="969.70" cy="625.60" r="4.9" fill="#e9688c"/><circle cx="996.80" cy="625.20" r="4.9" fill="#e9688c"/></svg>
<span class="t" style="left:150.50px;top:715.50px;font-size:13px;line-height:16px;color:#333;transform:scaleX(1.0585);-webkit-text-stroke:0.2px #333;">© International Energy Agency (IEA) and UN Statistics Division (UNSD).</span>
<svg class="b" style="left:26.2px;top:482px;" width="18" height="16" viewBox="0 0 18 16"><path d="M17.6 2 C17 2.3 16.3 2.5 15.6 2.6 C16.3 2.2 16.9 1.5 17.1 0.7 C16.4 1.1 15.7 1.4 14.9 1.5 C14.3 0.8 13.3 0.4 12.3 0.4 C10.4 0.4 8.8 2 8.8 3.9 C8.8 4.2 8.8 4.5 8.9 4.7 C5.9 4.6 3.3 3.2 1.6 1 C1.3 1.5 1.1 2.1 1.1 2.8 C1.1 4 1.7 5.1 2.7 5.7 C2.1 5.7 1.6 5.5 1.1 5.3 C1.1 7 2.3 8.5 3.9 8.8 C3.6 8.9 3.3 8.9 3 8.9 C2.8 8.9 2.5 8.9 2.3 8.8 C2.8 10.2 4.1 11.3 5.6 11.3 C4.4 12.2 2.9 12.8 1.2 12.8 C0.9 12.8 0.7 12.8 0.4 12.7 C2 13.7 3.8 14.3 5.8 14.3 C12.3 14.3 15.8 9 15.8 4.3 V3.9 C16.5 3.4 17.1 2.7 17.6 2 Z" fill="#555"/></svg>
<svg class="b" style="left:30px;top:510px;" width="10" height="18" viewBox="0 0 10 18"><path d="M6.6 17.5 V9.8 H9.1 L9.5 6.9 H6.6 V5.1 C6.6 4.2 6.9 3.7 8.1 3.7 H9.6 V1.1 C9.3 1 8.4 0.9 7.4 0.9 C5.2 0.9 3.7 2.2 3.7 4.7 V6.9 H1.2 V9.8 H3.7 V17.5 Z" fill="#555"/></svg>
<div class="b" style="left:1185.5px;top:199.5px;width:244.2px;height:560.2px;background:#fff;border:1px solid #dedede;box-sizing:border-box;box-shadow:0 0 22px rgba(0,0,0,0.10);"></div>
<div class="b" style="left:1186.5px;top:200.5px;width:242.2px;height:34px;background:#f1f1f1;"></div>
<div class="b" style="left:1186px;top:200px;width:35px;height:35px;background:#77926b;"></div>
<svg class="b" style="left:1186px;top:200px;" width="35" height="35" viewBox="0 0 35 35"><circle cx="17.56" cy="18" r="10.9" fill="none" stroke="#e3eddb" stroke-width="1.5" stroke-dasharray="61.4 7.1" transform="rotate(-75.5 17.56 18)"/><path d="M17.5 18 V23" stroke="#5d7552" stroke-width="0.9"/><polygon points="16.13,5.82 18.89,8.31 20.36,16.13 15.69,16.93" fill="#fafdf6"/><polygon points="13.47,17.20 16.44,18.00 16.76,20.58 7.56,25.29 6.71,24.04" fill="#fafdf6"/><polygon points="18.22,18.80 21.11,18.89 29.20,24.22 28.31,25.20 18.00,22.27" fill="#fafdf6"/></svg>
<span class="t" style="left:1231.80px;top:209.80px;font-size:12px;line-height:14px;color:#7f9a74;transform:scaleX(0.8920);">RENEWABLE ENERGY</span>
<span class="t" style="left:1213.00px;top:242.80px;font-size:12px;line-height:14px;color:#444;transform:scaleX(0.9232);">INDICATORS</span>
<span class="t" style="left:1341.00px;top:242.90px;font-size:12px;line-height:14px;color:#ababab;transform:scaleX(0.9169);">COUNTRY</span>
<div class="b" style="left:1186.5px;top:262px;width:242.2px;height:1px;background:#dedede;"></div>
<div class="b" style="left:1203px;top:259px;width:88px;height:3px;background:#484848;"></div>
<svg class="b" style="left:1205.5px;top:283.5px;" width="11" height="11" viewBox="0 0 11 11"><circle cx="5.5" cy="5.6" r="4.2" fill="none" stroke="#7f9a74" stroke-width="1.1"/><circle cx="5.5" cy="5.6" r="2.1" fill="#7f9a74"/></svg>
<span class="t" style="left:1223.70px;top:280.90px;font-size:12px;line-height:14px;color:#7f9a74;transform:scaleX(0.9638);">Renewable Energy share in Total</span>
<span class="t" style="left:1223.70px;top:299.00px;font-size:12px;line-height:14px;color:#7f9a74;transform:scaleX(0.9444);">Final Energy Consumption (%)</span>
<span class="t" style="left:471.90px;top:835.30px;font-size:11.5px;line-height:14px;color:#a9a9a9;transform:scaleX(0.9498);">A JOINT WEBSITE OF THE CUSTODIAN AGENCIES</span>
<span class="t" style="left:1126.80px;top:835.30px;font-size:11.5px;line-height:14px;color:#a9a9a9;transform:scaleX(0.9406);">FUNDING GRATEFULLY</span>
<span class="t" style="left:1123.30px;top:853.30px;font-size:11.5px;line-height:14px;color:#a9a9a9;transform:scaleX(0.9494);">ACKNOWLEDGED FROM</span>
<div class="b" style="left:1071px;top:870px;width:1px;height:30px;background:#c9c9c9;"></div>
<div class="b" style="left:1304px;top:870px;width:1px;height:30px;background:#c9c9c9;"></div>
<div class="b" style="left:1108px;top:896.4px;width:27px;height:6px;background:#f7e017;"></div>
<span class="t" style="left:1135.50px;top:887.80px;font-size:41px;line-height:49px;color:#0d2b52;font-weight:700;transform:scaleX(0.8916);">ESMAP</span>
<svg class="b" style="left:180px;top:896px;" width="80" height="4" viewBox="0 0 80 4"><rect x="5.4" y="2" width="7" height="3" fill="#1a3cf0"/><ellipse cx="28.3" cy="9" rx="8.4" ry="8" fill="#1a3cf0"/><ellipse cx="56" cy="9.2" rx="8" ry="8" fill="#1a3cf0"/><rect x="63.7" y="1.6" width="7.3" height="3" fill="#1a3cf0"/></svg>
<div class="b" style="left:305.7px;top:897.2px;width:32px;height:32px;background:#1d87a2;border-radius:50%;"></div>
<div class="b" style="left:332.2px;top:897.2px;width:32px;height:32px;background:#2b9dbd;border-radius:50%;"></div>
<span class="t" style="left:370.30px;top:890.70px;font-size:30px;line-height:36px;color:#3a3a3a;transform:scaleX(0.9107);-webkit-text-stroke:0.5px #3a3a3a;">IRENA</span>
<div class="b" style="left:477.3px;top:896.4px;width:60px;height:60px;background:transparent;border-radius:50%;border:1.2px solid #7fb0df;box-sizing:border-box;"></div>
<div class="b" style="left:501px;top:898.2px;width:13px;height:13px;background:transparent;border-radius:50%;border:1px solid #8bb8e2;box-sizing:border-box;"></div>
<div class="b" style="left:655.5px;top:896.8px;width:42px;height:42px;background:#1a9ad6;border-radius:50%;"></div>
<div class="b" style="left:896.2px;top:897px;width:1.6px;height:4px;background:#1583c6;"></div>
</div></body></html>
